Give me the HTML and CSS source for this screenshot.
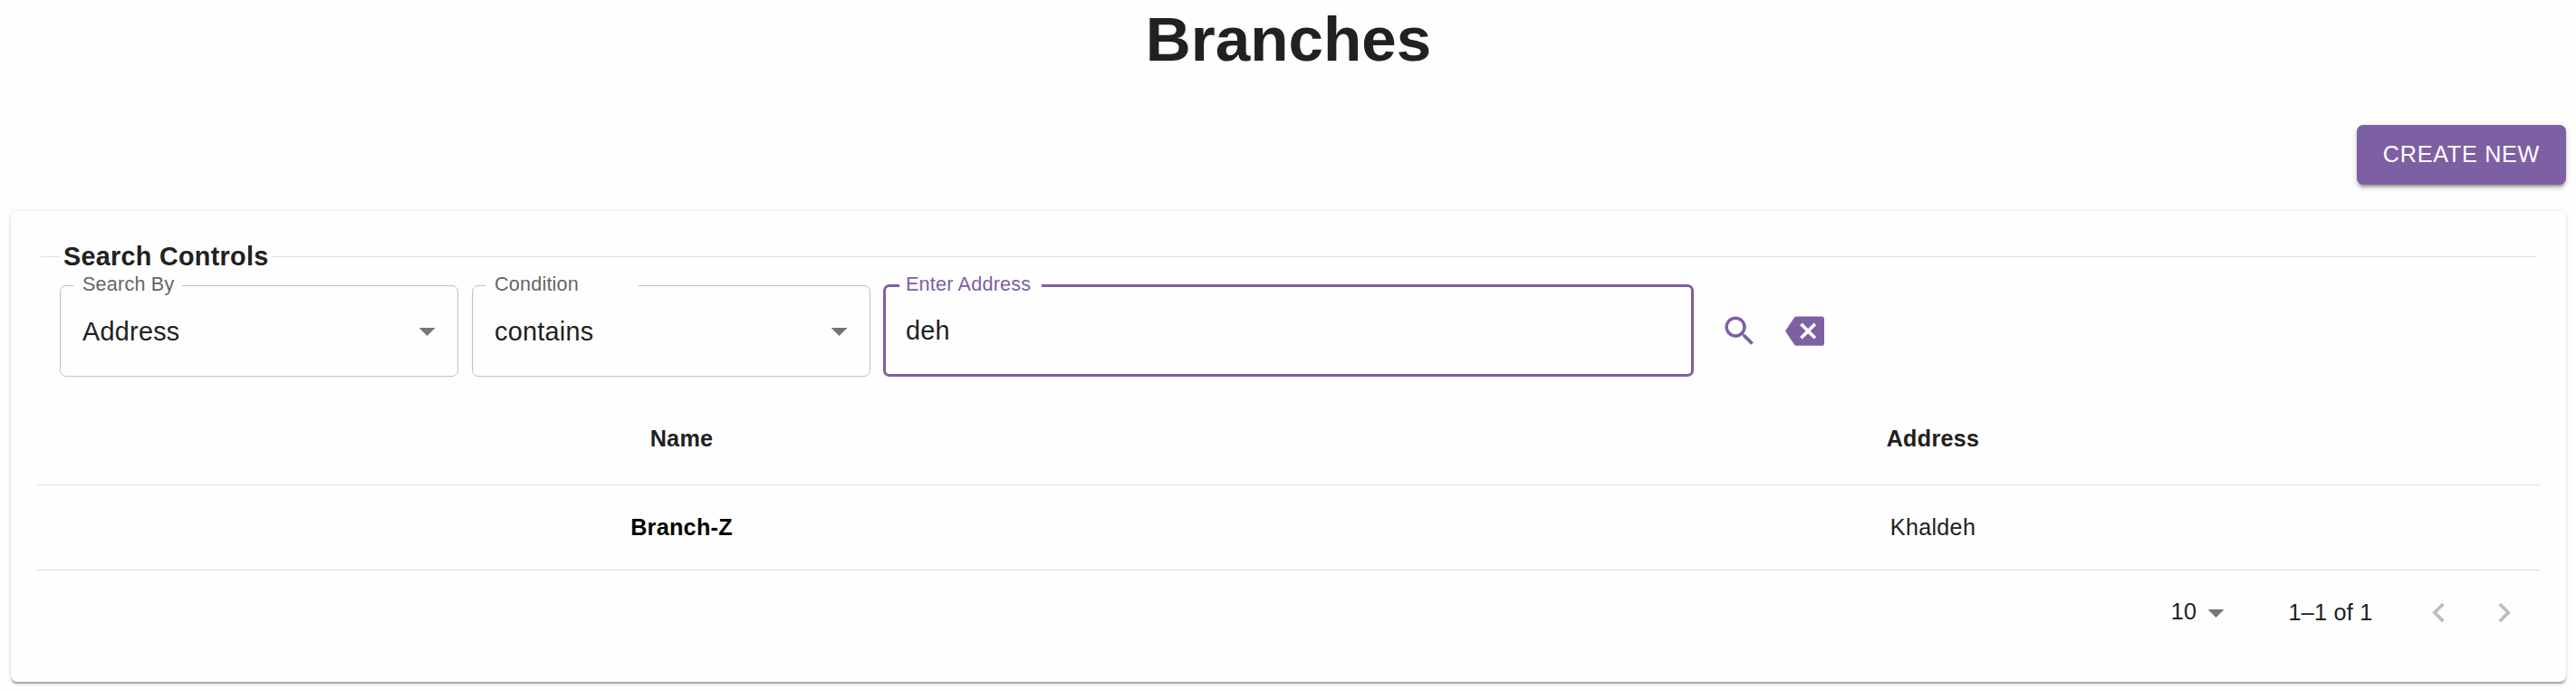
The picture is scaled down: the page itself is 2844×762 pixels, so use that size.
FILE: index.html
```html
<!DOCTYPE html>
<html lang="en">
<head>
<meta charset="utf-8">
<title>Branches</title>
<link rel="stylesheet" href="styles.css">
</head>
<body>
<main class="page">
  <h1 class="title">Branches</h1>
  <div class="actions"><button class="btn" type="button">CREATE NEW</button></div>
  <section class="card">
    <fieldset class="controls">
      <legend class="controls-legend">Search Controls</legend>
      <div class="controls-row">
        <fieldset class="field select">
          <legend class="label label-by">Search By</legend>
          <div class="value"><span>Address</span><svg class="icon" viewBox="0 0 24 24"><path d="M7 10l5 5 5-5z"/></svg></div>
        </fieldset>
        <fieldset class="field select">
          <legend class="label label-condition">Condition</legend>
          <div class="value"><span>contains</span><svg class="icon" viewBox="0 0 24 24"><path d="M7 10l5 5 5-5z"/></svg></div>
        </fieldset>
        <fieldset class="field focused">
          <legend class="label label-address">Enter Address</legend>
          <div class="value"><span>deh</span></div>
        </fieldset>
        <div class="tools">
          <svg class="icon" viewBox="0 0 24 24"><path d="M15.5 14h-.79l-.28-.27C15.41 12.59 16 11.11 16 9.5 16 5.91 13.09 3 9.5 3S3 5.91 3 9.5 5.91 16 9.5 16c1.61 0 3.09-.59 4.23-1.57l.27.28v.79l5 4.99L20.49 19l-4.99-5zm-6 0C7.01 14 5 11.99 5 9.5S7.01 5 9.5 5 14 7.01 14 9.5 11.99 14 9.5 14z"/></svg>
          <svg class="icon" viewBox="0 0 24 24"><path d="M22.500 3H7c-.69 0-1.230.35-1.590.88L0 12l5.410 8.110c.36.53.9.89 1.590.89h15.500c.8 0 1.400-.6 1.400-1.400V4.400c0-.8-.6-1.400-1.400-1.400zm-3.500 12.590L17.590 17 14 13.410 10.410 17 9 15.590 12.590 12 9 8.410 10.410 7 14 10.590 17.590 7 19 8.410 15.410 12 19 15.590z"/></svg>
        </div>
      </div>
    </fieldset>
    <table class="table">
      <colgroup><col class="col-name"><col class="col-address"></colgroup>
      <thead><tr><th>Name</th><th>Address</th></tr></thead>
      <tbody><tr><th class="name" scope="row">Branch-Z</th><td>Khaldeh</td></tr></tbody>
    </table>
    <div class="pagination">
      <span class="page-size">10</span>
      <svg class="icon size-arrow" viewBox="0 0 24 24"><path d="M7 10l5 5 5-5z"/></svg>
      <span class="range">1–1 of 1</span>
      <svg class="icon chevron" viewBox="0 0 24 24"><path d="M15.410 7.410L14 6l-6 6 6 6 1.410-1.410L10.830 12z"/></svg>
      <svg class="icon chevron next" viewBox="0 0 24 24"><path d="M10 6L8.590 7.410 13.170 12l-4.580 4.590L10 18l6-6z"/></svg>
    </div>
  </section>
</main>
</body>
</html>
```
FILE: styles.css
```css
* { box-sizing: border-box; }

body {
  margin: 0;
  background: #fefefe;
  color: #212121;
  font-family: "Liberation Sans", Arial, sans-serif;
}

.page {
  display: flex;
  flex-direction: column;
  height: 762px;
  padding: 0 11px 9px 12px;
  overflow: hidden;
}

.title {
  margin: 0;
  height: 138px;
  padding-top: 3px;
  font-size: 69.200px;
  line-height: 80px;
  text-align: center;
}

.actions {
  display: flex;
  justify-content: flex-end;
  height: 95px;
}

.btn {
  width: 231px;
  height: 66px;
  padding: 0 0 2px;
  border: 0;
  border-radius: 7px;
  background: #7d60a3;
  color: #fff;
  font: 25.200px/44px "Liberation Sans", Arial, sans-serif;
  letter-spacing: 0.72px;
  box-shadow: 0 5.400px 1.800px -3.600px rgba(0, 0, 0, .2), 0 3.600px 3.600px rgba(0, 0, 0, .14), 0 1.800px 9px rgba(0, 0, 0, .12);
}

.card {
  flex: 1;
  padding: 33px 29px 0;
  border-radius: 7px;
  background: #fefefe;
  box-shadow: 0 3.600px 1.800px -1.800px rgba(0, 0, 0, .2), 0 1.800px 1.800px rgba(0, 0, 0, .14), 0 1.800px 5.400px rgba(0, 0, 0, .12);
}

.icon {
  flex: none;
  width: 43.200px;
  height: 43.200px;
  fill: currentColor;
}

.controls {
  height: 168px;
  min-width: 0;
  margin: 0 4px;
  padding: 0 0 0 21px;
  border: 0;
  border-top: 1px solid #e0e0e0;
}

.controls-legend {
  width: 234px;
  padding: 0 0 0 4px;
  font-size: 28.800px;
  font-weight: 700;
  line-height: 34px;
  letter-spacing: 0.270px;
  white-space: nowrap;
}

.controls-row {
  display: flex;
  padding-top: 1px;
}

.field {
  height: 115px;
  min-width: 0;
  margin: 0 14px 0 0;
  padding: 0;
  border: 1px solid #c0c0c0;
  border-radius: 7px;
}

.select { width: 440px; margin-right: 15px; }
.select + .focused { width: 895px; margin: 0; margin-left: -1px; }

.label {
  height: 28px;
  margin-left: 14px;
  padding: 0 0 3px 10px;
  color: #666;
  font-size: 21.600px;
  line-height: 25px;
  letter-spacing: 0.200px;
  white-space: nowrap;
}

.label-by { width: 120px; }
.label-condition { width: 169px; }
.label-address { width: 157px; padding-left: 7px; }

.value {
  display: flex;
  align-items: center;
  justify-content: space-between;
  height: 74px;
  padding: 0 12px 0 24px;
  font-size: 28.800px;
  letter-spacing: 0.270px;
}

.value .icon { color: #757575; }

.focused { border: 3px solid #7d60a3; }
.focused .label { margin-left: 15px; color: #7d60a3; }
.focused .value { height: 72px; padding-left: 22px; }

.tools {
  display: flex;
  align-items: center;
  gap: 29px;
  height: 101px;
  margin: 14px 0 0 29px;
  color: #7d60a3;
}

.table {
  width: 2763px;
  border-collapse: separate;
  border-spacing: 0;
  table-layout: fixed;
  font-size: 25.200px;
  letter-spacing: 0.270px;
  text-align: center;
}

.col-name { width: 1423px; }
.col-address { width: 1340px; }

.table th,
.table td {
  height: 94px;
  padding: 0 0 1px;
  border-bottom: 1px solid #e0e0e0;
}

.table thead th { height: 102px; padding: 0; }
.table .name { color: #000; }

.pagination {
  display: flex;
  align-items: center;
  justify-content: flex-end;
  height: 94px;
  padding: 0 18px 1px 0;
  font-size: 25.200px;
  letter-spacing: 0.270px;
}

.page-size { margin-bottom: 2px; }
.size-arrow { color: #757575; }
.range { margin: 0 51px 0 58px; }
.chevron { color: #bdbdbd; }
.next { margin-left: 29px; }
```
